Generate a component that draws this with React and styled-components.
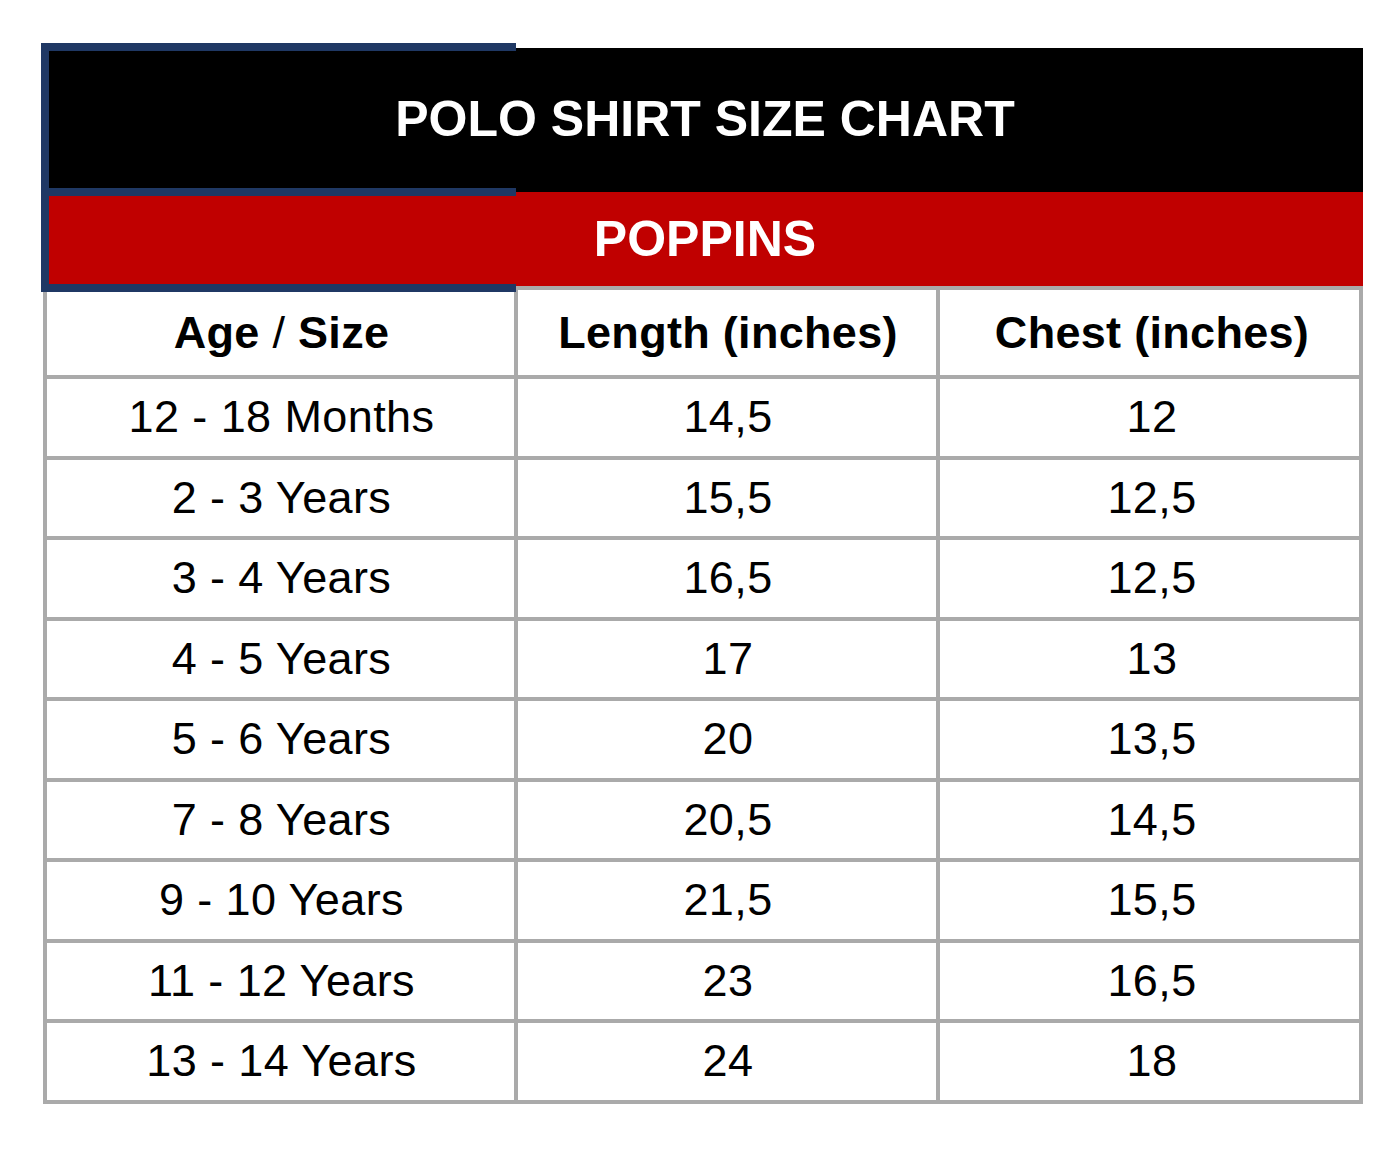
import styled, { createGlobalStyle } from 'styled-components';

const GlobalStyle = createGlobalStyle`
    body {
        margin: 0;
        background: #fff;
        font-family: "Liberation Sans", Arial, Helvetica, sans-serif;
    }
`;

const sizes = [
    ['12 - 18 Months', '14,5', '12'],
    ['2 - 3 Years', '15,5', '12,5'],
    ['3 - 4 Years', '16,5', '12,5'],
    ['4 - 5 Years', '17', '13'],
    ['5 - 6 Years', '20', '13,5'],
    ['7 - 8 Years', '20,5', '14,5'],
    ['9 - 10 Years', '21,5', '15,5'],
    ['11 - 12 Years', '23', '16,5'],
    ['13 - 14 Years', '24', '18'],
];

const App = () => {
    return (
        <>
            <GlobalStyle />
            <Page>
                <Chart>
                    <TitleBar>POLO SHIRT SIZE CHART</TitleBar>
                    <BrandBar>POPPINS</BrandBar>
                    <SizeGrid>
                        <Cell $head>Age <Slash>/</Slash> Size</Cell>
                        <Cell $head>Length (inches)</Cell>
                        <Cell $head $shift>Chest (inches)</Cell>
                        {sizes.map((row, idx) =>
                            row.map((value, col) => (
                                <Cell key={`${idx}-${col}`} $shift={col === 2}>{value}</Cell>
                            ))
                        )}
                    </SizeGrid>
                    {/* selection outline over the first column of the header */}
                    <Selection />
                </Chart>
            </Page>
        </>
    );
};

const Page = styled.div`
    padding: 48px 0 40px 43px;
`;

const Chart = styled.div`
    position: relative;
    width: 1320px;
`;

const TitleBar = styled.div`
    height: 144px;
    background: #000;
    color: #fff;
    display: flex;
    align-items: center;
    justify-content: center;
    font-size: 50px;
    font-weight: 700;
    padding: 0 0 3px 4px;
    box-sizing: border-box;
`;

const BrandBar = styled.div`
    height: 94px;
    background: #c00000;
    color: #fff;
    display: flex;
    align-items: center;
    justify-content: center;
    font-size: 50px;
    font-weight: 700;
    padding-left: 4px;
`;

const SizeGrid = styled.div`
    display: grid;
    grid-template-columns: 467px 418px 419px;
    grid-template-rows: 85px repeat(9, 76.5px);
    gap: 4px;
    padding: 4px;
    background: #aaaaaa;
`;

const Cell = styled.div`
    background: #fff;
    color: #000;
    display: flex;
    align-items: center;
    justify-content: center;
    white-space: pre;
    font-size: 45px;
    font-weight: ${(props) => (props.$head ? 700 : 400)};
    letter-spacing: ${(props) => (props.$head ? '0.3px' : '0.4px')};
    padding-left: ${(props) => (props.$shift ? '5px' : '2px')};
`;

const Slash = styled.span`
    font-weight: 400;
`;

const Selection = styled.div`
    position: absolute;
    left: -2px;
    top: -5px;
    width: 475px;
    height: 249px;
    box-sizing: border-box;
    border: 8px solid #1f3864;
    border-right: none;
    pointer-events: none;

    &::after {
        content: '';
        position: absolute;
        left: 0;
        right: 0;
        top: 137px;
        height: 8px;
        background: #1f3864;
    }
`;

export default App;
